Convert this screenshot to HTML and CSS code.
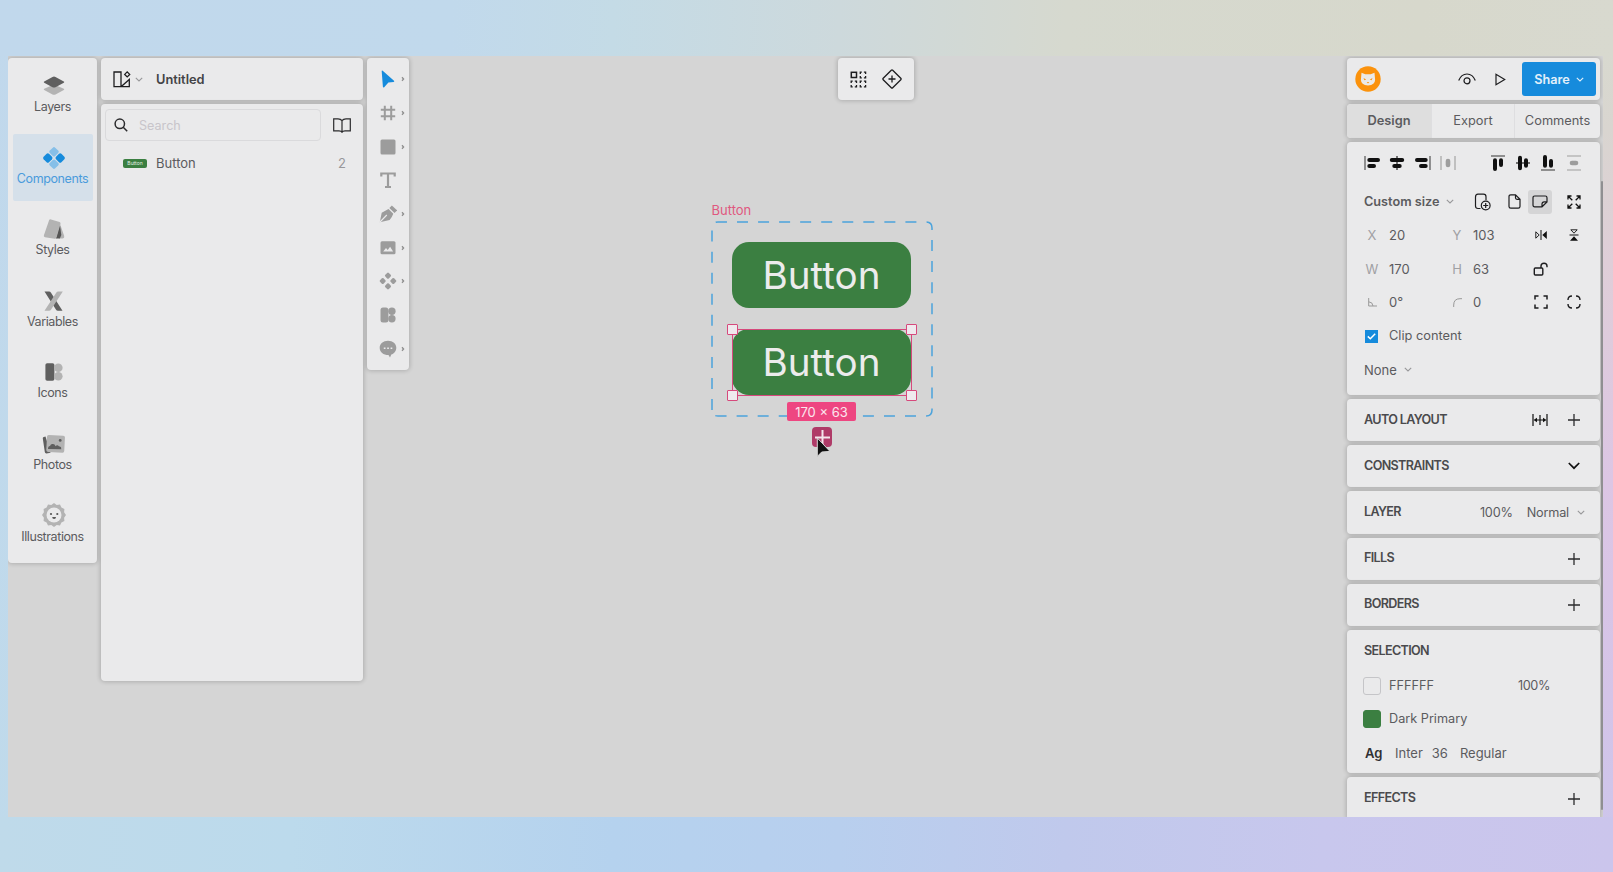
FILE: index.html
```
<!DOCTYPE html>
<html lang="en">
<head>
<meta charset="utf-8">
<title>Untitled</title>
<link rel="stylesheet" href="styles.css">
</head>
<body>
<svg class="defs" width="0" height="0">
  <symbol id="plus" viewBox="0 0 12 12"><path d="M6 0v12M0 6h12" stroke="#2b2b2d" stroke-width="1.3"/></symbol>
  <symbol id="chev" viewBox="0 0 8 5"><path d="M.8.8 4 4 7.2.8" fill="none" stroke="currentColor" stroke-width="1.1"/></symbol>
  <symbol id="more" viewBox="0 0 4 6"><path d="M1 1.200 2.600 3 1 4.800" fill="none" stroke="#8e8e8e" stroke-width="1.300"/></symbol>
</svg>
<main class="app">
  <nav class="side panel">
    <a class="nav"><svg width="24" height="22" viewBox="0 0 24 22"><path d="M2.200 13.800 12 9.500l9.800 4.300q1 .6 0 1.200l-8.300 4.400q-1.500.8-3 0L2.200 15q-1-.6 0-1.200" fill="#b3b3b3"/><path d="M2.200 6.600 10.500 2q1.500-.8 3 0l8.300 4.600q1 .6 0 1.200l-8.300 4.400q-1.500.8-3 0L2.200 7.800q-1-.6 0-1.200" fill="#5f5f5f"/></svg><span>Layers</span></a>
    <a class="nav on"><svg width="24" height="22" viewBox="0 0 24 22"><rect x="8.200" y="1" width="7.600" height="7.600" rx="1.700" transform="rotate(45 12 4.800)" fill="#86bfe8"/><rect x="8.200" y="13.400" width="7.600" height="7.600" rx="1.700" transform="rotate(45 12 17.200)" fill="#86bfe8"/><rect x="2" y="7.200" width="7.600" height="7.600" rx="1.700" transform="rotate(45 5.800 11)" fill="#168bdc"/><rect x="14.400" y="7.200" width="7.600" height="7.600" rx="1.700" transform="rotate(45 18.200 11)" fill="#168bdc"/></svg><span>Components</span></a>
    <a class="nav"><svg width="24" height="22" viewBox="0 0 24 22"><path d="m18.200 6.500 4 11.500q.5 2-1.500 2.500h-3.500z" fill="#b3b3b3"/><path d="m17.800 6 1.500 11-1.500 3.500h-4z" fill="#555"/><path d="M7 2.400q.5-1.400 2-1l8.600 2.700q1.200.5.900 2l-3.800 13q-.5 1.800-2 1.600L3 19.200q-1.600-.3-1.100-2z" fill="#b3b3b3"/></svg><span>Styles</span></a>
    <a class="nav"><svg width="24" height="22" viewBox="0 0 24 22"><path d="M2.500 1.500H7q1.300 0 2 1.200L20.500 20.800H16q-1.400 0-2.100-1.200z" fill="#5f5f5f"/><path d="M20.800 1.500h-4.600q-1.300 0-2 1.200L2.500 20.800H7q1.400 0 2.100-1.200z" fill="#b3b3b3"/></svg><span>Variables</span></a>
    <a class="nav"><svg width="24" height="22" viewBox="0 0 24 22"><rect x="3.400" y="2.300" width="9" height="17.400" rx="1.800" fill="#5f5f5f"/><circle cx="16.300" cy="6.700" r="4.300" fill="#b3b3b3"/><circle cx="16.300" cy="15.300" r="4.300" fill="#b3b3b3"/></svg><span>Icons</span></a>
    <a class="nav"><svg width="24" height="22" viewBox="0 0 24 22"><path d="m3.500 3.500-1.700.4Q.6 4.200.8 5.500l2 13.500q.2 1.500 1.700 1.400l4-.7z" fill="#5f5f5f"/><rect x="4.600" y="2.300" width="18" height="17" rx="1.800" transform="rotate(3 13 11)" fill="#b3b3b3"/><path d="M6 16q0-3 2-3 .8-2.600 3-2 1.800 0 2.600 2.200 1-1.500 2.500-.8.800 1.200 1.800 1 1.600.2 1.400 2.800z" fill="#5f5f5f"/><circle cx="18.200" cy="7.400" r="1.400" fill="#5f5f5f"/></svg><span>Photos</span></a>
    <a class="nav"><svg width="24" height="24" viewBox="0 0 24 24"><path d="m12 0 2.700 1.900 3.300-.3 1.400 3 3 1.400-.3 3.300L24 12l-1.900 2.700.3 3.300-3 1.400-1.400 3-3.300-.3L12 24l-2.700-1.900-3.300.3-1.400-3-3-1.400.3-3.300L0 12l1.900-2.700L1.600 6l3-1.400 1.400-3 3.300.3z" fill="#b3b3b3"/><circle cx="12" cy="12" r="7.500" fill="#eaeaeb"/><circle cx="9" cy="11" r="1.100" fill="#555"/><circle cx="15.300" cy="11" r="1.100" fill="#555"/><path d="M10.200 14h3.800q0 2-1.900 2t-1.900-2" fill="#555"/></svg><span>Illustrations</span></a>
  </nav>

  <section class="library">
    <header class="panel title">
      <svg width="18" height="17" viewBox="0 0 18 17" fill="none" stroke="#1d1d1f" stroke-width="1.300"><path d="M1 1h7v14.700H1zM1 15.700h15.300V8.500L8 15.700"/><path d="m14.200.9 2.500 2.500-2.500 2.500-2.500-2.500z"/></svg>
      <svg class="dim" width="8" height="5"><use href="#chev"/></svg>
      <b>Untitled</b>
    </header>
    <div class="panel browser">
      <div class="find">
        <div class="field"><svg width="14" height="14" viewBox="0 0 14 14" fill="none" stroke="#2b2b2d" stroke-width="1.500"><circle cx="5.800" cy="5.800" r="4.700"/><path d="m9.200 9.200 4 4"/></svg><span>Search</span></div>
        <svg width="18" height="15" viewBox="0 0 18 15" fill="none" stroke="#2b2b2d" stroke-width="1.200"><path d="M9 2.700Q7.700.8 5 .8H.7v12H6q2.300 0 3 1.400.7-1.400 3-1.400h5.300V.8H13Q10.300.8 9 2.700v11.500"/></svg>
      </div>
      <div class="entry"><i class="thumb">Button</i><span>Button</span><em>2</em></div>
    </div>
  </section>

  <aside class="tools panel">
    <div class="tool"><svg width="18" height="18" viewBox="0 0 18 18"><path d="M2.700 1.200Q2.700 0 3.700.8L15 10.800q.8.900-.4 1.100l-5.200.7-4.200 4.600q-1 .8-1.300-.5z" fill="#168bdc"/></svg><svg width="4" height="6"><use href="#more"/></svg></div>
    <div class="tool"><svg width="18" height="18" viewBox="0 0 18 18"><path d="M5.800 1.800v14.400M12.200 1.800v14.400M1.800 5.800h14.400M1.800 12.200h14.400" stroke="#9c9c9c" stroke-width="2"/></svg><svg width="4" height="6"><use href="#more"/></svg></div>
    <div class="tool"><svg width="18" height="18" viewBox="0 0 18 18"><rect x="1.500" y="1.500" width="15" height="15" rx="1.500" fill="#9c9c9c"/></svg><svg width="4" height="6"><use href="#more"/></svg></div>
    <div class="tool"><svg width="18" height="18" viewBox="0 0 18 18"><path d="M2.300 5.500v-3h13.400v3M9 2.500v13.300M6 16h6" fill="none" stroke="#9c9c9c" stroke-width="2.200"/></svg></div>
    <div class="tool"><svg width="18" height="18" viewBox="0 0 18 18"><path d="m.8 17.200 1.900-9.400Q6.500 5.800 9.500 4l4.800 4.800q-1.200 3.400-3.700 6.200z" fill="#9c9c9c"/><path d="m1 17 6.800-7" stroke="#eaeaeb" stroke-width="1.100"/><path d="m11.600 1.700 5.200 5" stroke="#9c9c9c" stroke-width="3.600"/></svg><svg width="4" height="6"><use href="#more"/></svg></div>
    <div class="tool"><svg width="18" height="18" viewBox="0 0 18 18"><rect x="1.500" y="2.300" width="15" height="13" rx="1.500" fill="#9c9c9c"/><path d="M4.200 12.600 7 9l1.700 2 2.400-3.200 3 4.800z" fill="#eaeaeb"/></svg><svg width="4" height="6"><use href="#more"/></svg></div>
    <div class="tool"><svg width="18" height="18" viewBox="0 0 18 18" fill="#9c9c9c"><rect x="6.500" y="1.200" width="5" height="5" rx="1.200" transform="rotate(45 9 3.700)"/><rect x="6.500" y="11.800" width="5" height="5" rx="1.200" transform="rotate(45 9 14.300)"/><rect x="1.200" y="6.500" width="5" height="5" rx="1.200" transform="rotate(45 3.700 9)"/><rect x="11.800" y="6.500" width="5" height="5" rx="1.200" transform="rotate(45 14.300 9)"/></svg><svg width="4" height="6"><use href="#more"/></svg></div>
    <div class="tool"><svg width="18" height="18" viewBox="0 0 18 18" fill="#9c9c9c"><rect x="1.500" y="1.500" width="7.900" height="15" rx="2.500"/><circle cx="12.900" cy="5.200" r="3.700"/><circle cx="12.900" cy="12.700" r="3.700"/></svg></div>
    <div class="tool"><svg width="18" height="18" viewBox="0 0 18 18"><path d="M9 .8c4.900 0 8.300 3 8.300 7 0 3.700-2.600 6-5 6.800L11 17.500 9.500 15C4.300 15 .7 12 .7 7.900S4.200.8 9 .8" fill="#9c9c9c"/><path d="M4.800 8.300h1.700M8.200 8.300h1.700M11.600 8.300h1.700" stroke="#eaeaeb" stroke-width="1.500"/></svg><svg width="4" height="6"><use href="#more"/></svg></div>
  </aside>

  <div class="canvas">
    <div class="quick panel">
      <svg width="17" height="17" viewBox="0 0 17 17" fill="none" stroke="#1d1d1f" stroke-width="1.500"><rect x="1.300" y="1.300" width="5.200" height="5.200"/><g stroke-width="1.300"><path d="M10.300 3V1.200h1.500M13.900 1.200h1.700V3M15.600 5v1.800h-1.700M11.800 6.800h-1.500V5"/><path d="M1.200 12v-1.800h1.500M4.800 10.200h1.700V12M6.500 14v1.800H4.800M2.700 15.800H1.200V14"/><path d="M10.300 12v-1.800h1.500M13.900 10.200h1.700V12M15.600 14v1.800h-1.700M11.800 15.800h-1.500V14"/></g></svg>
      <svg width="20" height="20" viewBox="0 0 20 20" fill="none" stroke="#1d1d1f" stroke-width="1.300"><path d="M9.300 1.200q.7-.7 1.400 0l8.100 8.100q.7.7 0 1.400l-8.100 8.100q-.7.7-1.400 0l-8.100-8.100q-.7-.7 0-1.400zM10 6.500v7M6.500 10h7"/></svg>
    </div>
    <span class="comp-name">Button</span>
    <svg class="frame" width="222" height="197" viewBox="0 0 222 197"><path d="M1 190V7q0-6 6-6h208q6 0 6 6v182q0 6-6 6H7q-6 0-6-6" fill="none" stroke="#4ba3dc" stroke-width="1.500" stroke-dasharray="11 10.050" stroke-dashoffset="-1"/></svg>
    <div class="btn first">Button</div>
    <div class="btn second">Button</div>
    <div class="sel"><i class="nw"></i><i class="ne"></i><i class="sw"></i><i class="se"></i></div>
    <span class="size">170 × 63</span>
    <span class="add"><svg width="15" height="15" viewBox="0 0 15 15"><path d="M7.500 0v15M0 7.500h15" stroke="#f4e6ec" stroke-width="2"/></svg></span>
    <svg class="cursor" width="16" height="21" viewBox="0 0 16 21"><path d="M1.300 1v18.400l4.400-4.400 8.300-.6z" fill="#111" stroke="#d7d7d7" stroke-width="1"/></svg>
  </div>

  <aside class="inspector">
    <header class="panel account">
      <svg width="26" height="26" viewBox="0 0 26 26"><circle cx="13" cy="13" r="12.700" fill="#fb920c"/><path d="m6.500 6.800 3.800 1.500h5.400l3.800-1.500.6 7q0 5-7.100 5.800-7.100-.8-7.100-5.800z" fill="#ebe9e6"/><path d="m8.500 12 2.700 1.500-1.800.7zM17.500 12l-2.700 1.500 1.800.7zM11.800 16h2.400L13 17.400z" fill="#fb920c"/></svg>
      <svg class="eye" width="18" height="12" viewBox="0 0 18 12" fill="none" stroke="#1d1d1f" stroke-width="1.200"><path d="M.7 7.500Q3.300 1 9 1t8.300 6.500"/><circle cx="9" cy="7.800" r="3"/></svg>
      <svg class="play" width="11" height="13" viewBox="0 0 11 13" fill="none" stroke="#1d1d1f" stroke-width="1.200"><path d="M1 1.200v10.600l8.700-5.300z"/></svg>
      <button class="share">Share <svg width="8" height="5"><use href="#chev"/></svg></button>
    </header>
    <div class="panel tabs"><b>Design</b><span>Export</span><span>Comments</span></div>

    <section class="panel design">
      <div class="align">
        <svg width="16" height="16" viewBox="0 0 16 16"><path d="M1 1v14" stroke="#444" stroke-width="1.100"/><path d="M5.300 5H14M5.300 11H10" stroke="#111" stroke-width="4" stroke-linecap="round"/></svg>
        <svg width="16" height="16" viewBox="0 0 16 16"><path d="M8 1v14" stroke="#111" stroke-width="1.100"/><path d="M2.800 5h10.400M5.300 11h5.400" stroke="#111" stroke-width="4" stroke-linecap="round"/></svg>
        <svg width="16" height="16" viewBox="0 0 16 16"><path d="M15 1v14" stroke="#444" stroke-width="1.100"/><path d="M2 5h8.700M6 11h4.700" stroke="#111" stroke-width="4" stroke-linecap="round"/></svg>
        <svg width="16" height="16" viewBox="0 0 16 16"><path d="M1 1v14M15 1v14" stroke="#9d9d9d" stroke-width="1.100"/><path d="M8 6v4" stroke="#9d9d9d" stroke-width="4.600" stroke-linecap="round"/></svg>
        <svg class="vert" width="16" height="16" viewBox="0 0 16 16"><path d="M1 1h14" stroke="#444" stroke-width="1.100"/><path d="M5 5.300V14M11 5.300V10" stroke="#111" stroke-width="4" stroke-linecap="round"/></svg>
        <svg width="16" height="16" viewBox="0 0 16 16"><path d="M1 8h14" stroke="#111" stroke-width="1.100"/><path d="M5 2.800v10.400M11 5.300v5.400" stroke="#111" stroke-width="4" stroke-linecap="round"/></svg>
        <svg width="16" height="16" viewBox="0 0 16 16"><path d="M1 15h14" stroke="#444" stroke-width="1.100"/><path d="M5 2v8.700M11 6v4.700" stroke="#111" stroke-width="4" stroke-linecap="round"/></svg>
        <svg width="16" height="16" viewBox="0 0 16 16"><path d="M1 1h14M1 15h14" stroke="#9d9d9d" stroke-width="1.100"/><path d="M6 8h4" stroke="#9d9d9d" stroke-width="4.600" stroke-linecap="round"/></svg>
      </div>
      <div class="preset">
        <b>Custom size</b>
        <svg class="dim" width="8" height="5"><use href="#chev"/></svg>
        <svg class="fit" width="17" height="18" viewBox="0 0 17 18" fill="none" stroke="#1d1d1f" stroke-width="1.200"><path d="M6.500 15.500H4q-2.500 0-2.500-2.500V4Q1.500 1.200 4 1.200h5.500q2.500 0 2.500 2.600v3.400"/><circle cx="11.700" cy="12.500" r="4.400"/><path d="M11.700 10v5M9.200 12.500h5"/></svg>
        <svg class="doc" width="13" height="15" viewBox="0 0 13 15" fill="none" stroke="#1d1d1f" stroke-width="1.200"><path d="M7.500.8H2.800Q1 .8 1 2.500v10Q1 14.200 2.800 14.200h7.400q1.800 0 1.800-1.700V5.300zv3q0 1.500 1.500 1.500H12"/></svg>
        <i class="picked"><svg width="16" height="13" viewBox="0 0 16 13" fill="none" stroke="#1d1d1f" stroke-width="1.200"><path d="M10 11.800H2.700Q1 11.800 1 10V2.700Q1 1 2.700 1h10.600Q15 1 15 2.700V7zV9q0-2.200 2.200-2.200H15"/></svg></i>
        <svg width="14" height="14" viewBox="0 0 14 14" fill="none" stroke="#111" stroke-width="1.300"><path d="M4.500 1H1v3.500M1 1l4.300 4.300M9.500 1H13v3.500M13 1 8.700 5.300M4.500 13H1V9.500M1 13l4.300-4.300M9.500 13H13V9.500M13 13 8.700 8.700"/></svg>
      </div>
      <div class="prop"><label>X</label><span>20</span><label>Y</label><span>103</span>
        <svg width="12" height="10" viewBox="0 0 12 10"><path d="M.8 1.800v6.400L4.200 5z" fill="none" stroke="#222"/><path d="M11.800 1v8L7.300 5zM5.500 0h1v10h-1z" fill="#111"/></svg>
        <svg width="10" height="12" viewBox="0 0 10 12"><path d="M1.800.8h6.400L5 4.200z" fill="none" stroke="#222"/><path d="M1 11.800h8L5 7.300zM.5 5.500h9v1h-9z" fill="#111"/></svg></div>
      <div class="prop"><label>W</label><span>170</span><label>H</label><span>63</span>
        <svg width="15" height="14" viewBox="0 0 15 14" fill="none" stroke="#1d1d1f" stroke-width="1.400"><rect x="1.300" y="6" width="8.500" height="7" rx="1"/><path d="M8 6V4q0-2.800 3-2.800T14 4v1.300"/></svg></div>
      <div class="prop"><label><svg width="9" height="9" viewBox="0 0 9 9" fill="none" stroke="#999"><path d="M.7 0v8H9M.7 3.800q4 .2 4.300 4.200"/></svg></label><span>0°</span><label><svg width="9" height="9" viewBox="0 0 9 9" fill="none" stroke="#999"><path d="M.7 9V7Q.7.7 7 .7h2"/></svg></label><span>0</span>
        <svg width="14" height="14" viewBox="0 0 14 14" fill="none" stroke="#1d1d1f" stroke-width="1.500"><path d="M1 4.500V1h3.500M9.500 1H13v3.500M13 9.500V13H9.500M4.500 13H1V9.500"/></svg>
        <svg width="14" height="14" viewBox="0 0 14 14" fill="none" stroke="#1d1d1f" stroke-width="1.400"><path d="M1 5Q1 1 5 1M9 1q4 0 4 4M13 9q0 4-4 4M5 13q-4 0-4-4"/></svg></div>
      <div class="prop"><i class="check"><svg width="9" height="7" viewBox="0 0 9 7"><path d="m.8 3.400 2.500 2.300L8.200.8" fill="none" stroke="#fff" stroke-width="1.500"/></svg></i><span class="wide">Clip content</span></div>
      <div class="prop none"><span>None</span><svg class="dim" width="8" height="5"><use href="#chev"/></svg></div>
    </section>

    <section class="panel group"><h2>AUTO LAYOUT</h2><svg class="second-last" width="16" height="12" viewBox="0 0 16 12"><path d="M1 0v12M15 0v12M8 1v10M3 6h10" stroke="#111" stroke-width="1.200"/><path d="m1.500 6 3.500-2.300v4.600zM14.500 6 11 3.700v4.600z" fill="#111"/></svg><svg width="12" height="12"><use href="#plus"/></svg></section>
    <section class="panel group"><h2>CONSTRAINTS</h2><svg class="open" width="12" height="8" viewBox="0 0 12 8"><path d="m.8 1 5.200 5.200L11.200 1" fill="none" stroke="#111" stroke-width="1.700"/></svg></section>
    <section class="panel group layer"><h2>LAYER</h2><span class="opacity">100%</span><span class="blend">Normal</span><svg class="dim" width="8" height="5"><use href="#chev"/></svg></section>
    <section class="panel group"><h2>FILLS</h2><svg width="12" height="12"><use href="#plus"/></svg></section>
    <section class="panel group"><h2>BORDERS</h2><svg width="12" height="12"><use href="#plus"/></svg></section>
    <section class="panel selection">
      <h2>SELECTION</h2>
      <div class="swatch"><i></i><span>FFFFFF</span><span class="pct">100%</span></div>
      <div class="swatch green"><i></i><span>Dark Primary</span></div>
      <div class="type"><b>Ag</b><span>Inter</span><span>36</span><span>Regular</span></div>
    </section>
    <section class="panel group last"><h2>EFFECTS</h2><svg width="12" height="12"><use href="#plus"/></svg></section>
  </aside>
  <div class="scroll"></div>
</main>
</body>
</html>
```
FILE: styles.css
```
* { box-sizing: border-box; }
body {
  margin: 0;
  width: 1613px;
  height: 872px;
  overflow: hidden;
  padding: 56px 10px 55px 8px;
  font: 13px/16px Inter, sans-serif;
  color: #5b5b5e;
  background:
    linear-gradient(92deg, #c1d8ec 0, #c1d9ec 28%, #c4dbe6 38%, #cdd9dc 52%, #d6d9cf 66%, #d7d8cc 88%, #d8d9cf) 0 0 / 100% 56px no-repeat,
    linear-gradient(92deg, #bfdaea 0, #bcdaec 18%, #b5d2ee 38%, #b8cfee 52%, #c0c9ec 66%, #c8c7ed 82%, #cbc5ec) 0 100% / 100% 55px no-repeat,
    linear-gradient(#d8d9cf 6%, #d9d5d0 15%, #dfced8 30%, #dcc6e4 55%, #d4c4e8 80%, #cbc6ec) 100% 0 / 12px 100% no-repeat,
    linear-gradient(#c1d8ec, #bfdaeb);
}
svg { display: block; flex: none; }
i, em { font-style: normal; }
b { font-weight: 600; }
h2 { margin: 0; font-size: 12.600px; line-height: 16px; font-weight: 600; letter-spacing: -.65px; color: #4a4a4d; }
.defs { position: absolute; }
.app { position: relative; display: flex; width: 1595px; height: 761px; padding-top: 2px; background: #d5d5d5; overflow: hidden; }
.panel { background: #eaeaeb; border-radius: 4px; box-shadow: 0 0 4px 1px rgba(0,0,0,.18); }
.dim { color: #98989a; }

.side { width: 89px; height: 505px; padding: 4.500px 4px 0 5px; display: flex; flex-direction: column; gap: 4.600px; flex: none; }
.nav { height: 67px; border-radius: 2px; display: flex; flex-direction: column; align-items: center; padding-top: 12.500px; }
.nav svg { height: 22px; margin-left: 1px; }
.nav span { margin-top: 2px; font-size: 12.500px; letter-spacing: -.4px; margin-left: -1px; }
.nav:last-child svg { height: 24px; margin-top: -2px; }
.on { background: #d5e0ea; color: #4a9bdc; }

.library { width: 262px; margin-left: 4px; display: flex; flex-direction: column; gap: 4px; flex: none; }
.title { height: 42px; display: flex; align-items: center; padding-left: 12px; }
.title .dim { margin: 0 13px 0 4px; }
.title b { margin-top: 1px; font-size: 12.800px; color: #434346; }
.browser { height: 577px; }
.find { display: flex; align-items: center; padding: 5px 0 0 4px; gap: 12px; }
.field { width: 216px; height: 32px; border: 1px solid #dadadc; border-radius: 4px; display: flex; align-items: center; gap: 11px; padding-left: 8px; color: #c8c5ca; font-size: 12.600px; }
.field span { padding-top: 1px; }
.entry { display: flex; align-items: center; height: 44px; padding: 0 17px 0 22px; }
.thumb { width: 24px; height: 9px; border-radius: 2px; background: #3b7f41; color: #e2efe3; font-size: 5px; line-height: 9px; text-align: center; margin-right: 9px; }
.entry em { margin-left: auto; color: #98989a; }

.tools { width: 42px; height: 312px; margin-left: 4px; padding-top: 4.500px; flex: none; }
.tool { height: 33.670px; display: flex; align-items: center; padding-left: 12px; gap: 4px; }

.canvas { position: relative; flex: 1; }
.quick { position: absolute; left: 429px; top: 0; width: 76px; height: 42px; display: flex; align-items: center; padding: 0 12px; justify-content: space-between; }
.comp-name { position: absolute; left: 302.500px; top: 144px; color: #e0587f; }
.frame { position: absolute; left: 302px; top: 163px; }
.btn { position: absolute; left: 323px; width: 179px; height: 66px; border-radius: 17px; background: #3b7f41; color: #ececec; font-size: 38.600px; line-height: 66px; text-align: center; }
.first { top: 184px; }
.second { top: 271px; }
.sel { position: absolute; left: 323px; top: 271px; width: 180px; height: 67px; border: 1px solid #d6497c; }
.sel i { position: absolute; width: 11px; height: 11px; background: #efe9ee; border: 1px solid #d6497c; border-radius: 1px; }
.nw, .ne { top: -6px; }
.sw, .se { bottom: -6px; }
.nw, .sw { left: -6px; }
.ne, .se { right: -6px; }
.size { position: absolute; left: 378px; top: 344px; width: 69px; height: 19px; border-radius: 2px; background: #ee4681; color: #fbe6ee; text-align: center; line-height: 20px; }
.add { position: absolute; left: 403px; top: 369px; width: 20px; height: 20px; border-radius: 4px; background: #af3b68; display: grid; place-items: center; }
.cursor { position: absolute; left: 407px; top: 379px; }

.inspector { width: 253px; margin-right: 3px; display: flex; flex-direction: column; flex: none; gap: 4px; }
.inspector > * { flex: none; }
.account { height: 42px; display: flex; align-items: center; padding: 0 4px 0 8px; }
.eye { margin-left: 77px; }
.play { margin-left: 19px; }
.share { width: 74px; height: 34px; border: 0; border-radius: 3px; background: #168bdc; color: #e3f0fa; font: 600 12.700px/16px Inter, sans-serif; display: flex; align-items: center; justify-content: center; gap: 6px; padding: 1px 0 0; margin-left: auto; }
.tabs { height: 34px; display: grid; grid-template-columns: 84px 83px 86px; overflow: hidden; text-align: center; line-height: 34px; font-size: 12.800px; }
.tabs b { background: #dedede; }
.tabs span { border-left: 1px solid #dedee0; }
.design { height: 253px; padding-left: 17px; }
.align { height: 42px; display: flex; align-items: center; gap: 9.300px; }
.align .vert { margin-left: 24.500px; }
.preset { height: 34px; display: flex; align-items: center; padding-top: 1px; }
.preset b { width: 77px; font-size: 12.700px; white-space: nowrap; }
.preset > .dim { margin: 0 20px 0 5px; }
.preset .doc { margin: 0 7px 0 17px; }
.picked { width: 24px; height: 24px; margin-right: 14.500px; border-radius: 3px; background: #d5d5d6; display: grid; place-items: center; }
.prop { height: 33.670px; display: grid; grid-template-columns: 25px 62.500px 21.500px 50px 35px 32px; align-items: center; padding-top: .6px; }
.prop > svg { justify-self: center; }
.prop label { width: 16px; display: grid; place-items: center; color: #a0a0a3; }
.prop label:nth-of-type(2) { width: 11px; }
.check { width: 13px; height: 13px; margin-left: 1px; background: #168bdc; display: grid; place-items: center; }
.wide { white-space: nowrap; font-size: 12.800px; }
.none { display: flex; gap: 7px; }
.group { height: 42.200px; display: flex; align-items: center; padding: 0 20px 0 17px; }
.group > svg:last-child { margin-left: auto; }
.group h2 { margin-top: -1px; }
.group .second-last { margin-left: auto; }
.group .second-last + svg { margin-left: 20px; }
.layer { padding-right: 15px; }
.layer > span { font-size: 12.700px; letter-spacing: -.2px; padding-top: 1px; }
.opacity { margin-left: auto; margin-right: 14px; }
.group.layer > svg:last-child { margin-left: 8px; }
.selection { height: 143.500px; padding: 13px 0 0 17px; }
.swatch, .type { height: 33.600px; display: flex; align-items: center; }
.swatch span { font-size: 12.700px; }
h2 + .swatch { margin-top: 10px; }
.swatch i { width: 18px; height: 18px; margin: 0 8px 0 -1px; border: 1px solid #c5c5c8; border-radius: 3px; }
.green i { background: #3b7f41; border-color: #3b7f41; }
.swatch .pct { margin-left: auto; margin-right: 50px; letter-spacing: -.4px; }
.type b { width: 31px; padding-left: 1px; color: #303033; }
.type span { margin-right: 9px; }
.type span:last-child { margin-left: 3px; }
.scroll { position: absolute; right: 0; top: 125px; width: 2px; height: 629px; background: #8f8f91; border-radius: 2px; }
```
